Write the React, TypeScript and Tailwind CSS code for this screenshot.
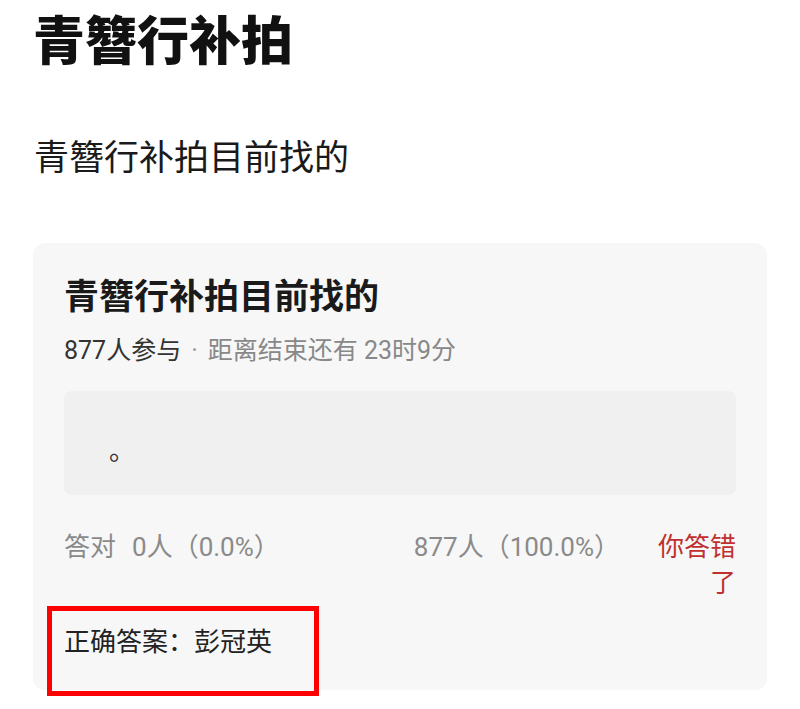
export default function App() {
  return (
    <div
      className="min-h-[709px] bg-white px-[33px] pt-[13px] text-[#1a1a1a]"
      style={{ fontFamily: 'Roboto, "Noto Sans CJK SC", sans-serif' }}
    >
      <h1 className="text-[52px] font-black leading-[60px] text-[#111]">青簪行补拍</h1>
      <p className="mt-[62px] ml-[1px] text-[35px] leading-[48px] text-[#1a1a1a]">青簪行补拍目前找的</p>

      {/* Question card */}
      <div className="relative mt-[60px] rounded-[12px] bg-[#f7f7f7] px-[31px] pb-[30px] pt-[31px]">
        <h2 className="text-[35px] font-bold leading-[48px] text-[#1a1a1a]">青簪行补拍目前找的</h2>
        <div className="mt-[12px] text-[25px] leading-[34px]">
          <span className="text-[#333]">877人参与</span>
          <span className="mx-[10px] text-[#999]">·</span>
          <span className="text-[#888]">距离结束还有 23时9分</span>
        </div>

        <div className="mt-[23px] h-[104px] rounded-[8px] bg-[#f0f0f0] pl-[45px] pt-[42px] text-[26px] leading-[36px] text-[#333]">
          。
        </div>

        <div className="mt-[34px] flex items-start text-[26px] leading-[36px]">
          <div className="flex flex-1 gap-[16px] text-[#8a8a8a]">
            <span>答对</span>
            <span>0人（0.0%）</span>
          </div>
          <div className="text-[#8a8a8a]">877人（100.0%）</div>
          <div className="ml-[36px] w-[80px] text-right text-[#c0302e]">你答错了</div>
        </div>

        <p className="mt-[23px] text-[26px] leading-[36px] text-[#222]">正确答案：彭冠英</p>

        {/* annotation highlight */}
        <div className="absolute left-[14px] top-[363px] h-[90px] w-[272px] border-[5px] border-[#ff0000]" />
      </div>
    </div>
  );
}
